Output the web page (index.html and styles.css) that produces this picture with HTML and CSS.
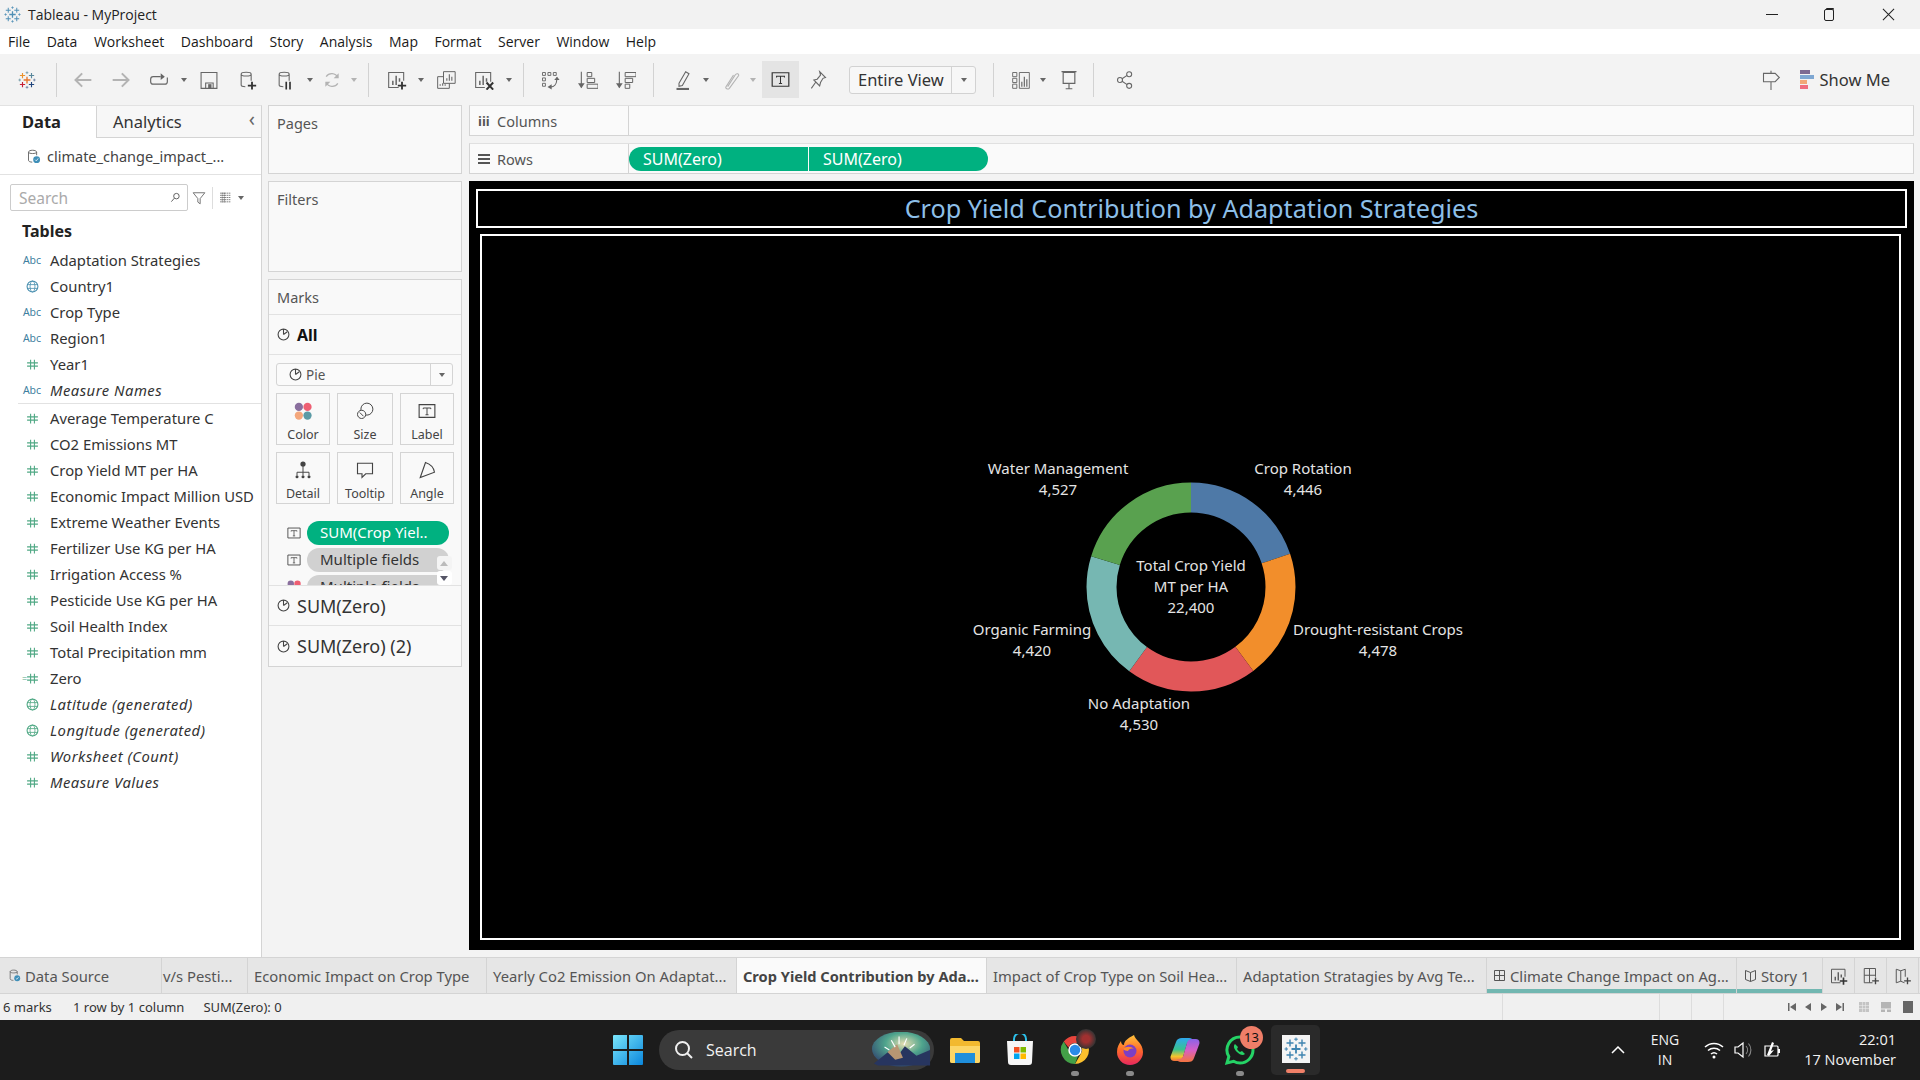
FILE: index.html
```html
<!DOCTYPE html>
<html lang="en">
<head>
  <meta charset="UTF-8">
  <title>Tableau - MyProject</title>
  <link rel="stylesheet" href="styles.css">
</head>
<body>

<svg class="sprite" xmlns="http://www.w3.org/2000/svg">
  <symbol id="i-logo" viewBox="0 0 24 24"><g fill="none" stroke="currentColor"><path d="M12 7.500v9M7.500 12h9" stroke-width="1.800"/><path d="M6 2.500v7M2.500 6h7M18 2.500v7M14.500 6h7M6 14.500v7M2.500 18h7M18 14.500v7M14.500 18h7" stroke-width="1.400"/><path d="M12 .5v3.500M10.200 2.200h3.600M12 20v3.500M10.200 21.800h3.600M2.200 10.200v3.600M.5 12h3.500M21.800 10.200v3.600M20 12h3.500" stroke-width="1"/></g></symbol>
  <symbol id="i-back" viewBox="0 0 24 24"><path d="M22 12H3M11 4l-8 8 8 8" fill="none" stroke="currentColor" stroke-width="2.400"/></symbol>
  <symbol id="i-fwd" viewBox="0 0 24 24"><path d="M2 12h19M13 4l8 8-8 8" fill="none" stroke="currentColor" stroke-width="2.400"/></symbol>
  <symbol id="i-redo" viewBox="0 0 24 24"><path d="M14 8H5a3 3 0 0 0-3 3v3a3 3 0 0 0 3 3h14a3 3 0 0 0 3-3v-5" fill="none" stroke="currentColor" stroke-width="1.400"/><path d="M14 4l5 4-5 4z" fill="currentColor"/></symbol>
  <symbol id="i-save" viewBox="0 0 24 24"><path d="M2.500 3h19v19h-19zM8 22v-6.500h9V22" fill="none" stroke="currentColor" stroke-width="1.300"/><path d="M11 17h4v5h-4z" fill="currentColor"/></symbol>
  <symbol id="i-dbadd" viewBox="0 0 24 24"><path d="M5 5c0-3 12-3 12 0v8M5 5c0 3 12 3 12 0M5 5v13c0 1 2 2 5 2" fill="none" stroke="currentColor" stroke-width="1.300"/><path d="M18 14v9.500M13 18.700h10" fill="none" stroke="#333" stroke-width="2.200"/></symbol>
  <symbol id="i-dbpause" viewBox="0 0 24 24"><path d="M5 5c0-3 12-3 12 0v8M5 5c0 3 12 3 12 0M5 5v13c0 1 2 2 5 2" fill="none" stroke="currentColor" stroke-width="1.300"/><path d="M13.500 14v9.500M18 14v9.500" fill="none" stroke="#333" stroke-width="2"/></symbol>
  <symbol id="i-refresh" viewBox="0 0 24 24"><path d="M19 9a8 8 0 0 0-14-1M5 15a8 8 0 0 0 14 1" fill="none" stroke="currentColor" stroke-width="1.400"/><path d="M20 4v6h-6zM4 20v-6h6z" fill="currentColor"/></symbol>
  <symbol id="i-sheetadd" viewBox="0 0 24 24"><path d="M14 21H2V3h18v10" fill="none" stroke="currentColor" stroke-width="1.300"/><path d="M7 18v-5M11 18V7M15 14V10" stroke="currentColor" stroke-width="1.800"/><path d="M18 14v9.500M13 18.700h10" fill="none" stroke="#333" stroke-width="2.200"/></symbol>
  <symbol id="i-sheetdup" viewBox="0 0 24 24"><path d="M9 2h14v14H9zM9 8H2v14h14v-6" fill="none" stroke="currentColor" stroke-width="1.200"/><path d="M13 13v-3M16 13V5M19 13V8M5 19v-2M8 19v-3M11 19v-2" stroke="currentColor" stroke-width="1.300"/></symbol>
  <symbol id="i-sheetclr" viewBox="0 0 24 24"><path d="M13 21H2V3h18v11" fill="none" stroke="currentColor" stroke-width="1.300"/><path d="M7 18v-5M11 18V7M15 14V10" stroke="currentColor" stroke-width="1.800"/><path d="M15 15l8 8.500M23 15l-8 8.500" fill="none" stroke="#333" stroke-width="2.400"/></symbol>
  <symbol id="i-swap" viewBox="0 0 24 24"><path d="M3 3h3.500v3.500H3zM9.500 3H13v3.500H9.500zM16 3h3.500v3.500H16zM3 9.500h3.500V13H3zM3 16h3.500v3.500H3z" fill="none" stroke="currentColor" stroke-width="1.100"/><path d="M20 9v4a8 8 0 0 1-7 7.500" fill="none" stroke="currentColor" stroke-width="1.300"/><path d="M14 17l-5 3.500 5 3zM17 12l3.500-4 3 4z" fill="currentColor"/></symbol>
  <symbol id="i-sortup" viewBox="0 0 24 24"><path d="M4 2v19" fill="none" stroke="currentColor" stroke-width="1.300"/><path d="M0 16l4 6 4-6z" fill="currentColor"/><path d="M11 3h5.500v5H11zM11 10h9v5h-9zM11 17h13v5H11z" fill="none" stroke="currentColor" stroke-width="1.200"/></symbol>
  <symbol id="i-sortdn" viewBox="0 0 24 24"><path d="M4 2v19" fill="none" stroke="currentColor" stroke-width="1.300"/><path d="M0 16l4 6 4-6z" fill="currentColor"/><path d="M11 3h13v5H11zM11 10h9v5h-9zM11 17h5.500v5H11z" fill="none" stroke="currentColor" stroke-width="1.200"/></symbol>
  <symbol id="i-pen" viewBox="0 0 24 24"><path d="M6 16L14 2l4 2.500-8 14-4 1z" fill="none" stroke="currentColor" stroke-width="1.300"/><path d="M3 21.500h15v2.500H3z" fill="currentColor"/></symbol>
  <symbol id="i-clip" viewBox="0 0 24 24"><path d="M8 20L17 6c2-3 5-1 4 1L10 22c-2 2-5 0-4-2l9-14" fill="none" stroke="currentColor" stroke-width="1.300"/></symbol>
  <symbol id="i-tbox" viewBox="0 0 24 24"><path d="M1.500 3.500h21v17h-21z" fill="none" stroke="currentColor" stroke-width="1.500"/><path d="M7 9.500V8h10v1.500M12 8v9M10 17h4" fill="none" stroke="currentColor" stroke-width="1.300"/></symbol>
  <symbol id="i-pin" viewBox="0 0 24 24"><path d="M14 2l7 7-3 1-3 5-1 4-7-7 4-1 4-5zM9 15l-5 7" fill="none" stroke="currentColor" stroke-width="1.300"/></symbol>
  <symbol id="i-cards" viewBox="0 0 24 24"><path d="M2 3h5v5H2zM2 10h5v5H2zM2 17h5v5H2zM10 3h12v19H10z" fill="none" stroke="currentColor" stroke-width="1.100"/><path d="M13 20v-6M16 20V8M19 20v-9" stroke="currentColor" stroke-width="1.400"/></symbol>
  <symbol id="i-present" viewBox="0 0 24 24"><path d="M3 2h18M5 3h14v13H5zM12 16v6M8 22.500h8" fill="none" stroke="currentColor" stroke-width="1.400"/></symbol>
  <symbol id="i-share" viewBox="0 0 24 24"><circle cx="17" cy="5" r="3" fill="none" stroke="currentColor" stroke-width="1.300"/><circle cx="6" cy="12" r="3" fill="none" stroke="currentColor" stroke-width="1.300"/><circle cx="17" cy="19" r="3" fill="none" stroke="currentColor" stroke-width="1.300"/><path d="M8.500 10.500l6-4M8.500 13.500l6 4" stroke="currentColor" stroke-width="1.300"/></symbol>
  <symbol id="i-sign" viewBox="0 0 24 24"><path d="M12 1v3M3 4h14l5 5-5 5H3zM12 14v10" fill="none" stroke="currentColor" stroke-width="1.300"/></symbol>
  <symbol id="i-db" viewBox="0 0 24 24"><path d="M4 5c0-4 13-4 13 0v5M4 5c0 3 13 3 13 0M4 5v13c0 2 3 3 6 3" fill="none" stroke="#666" stroke-width="1.500"/><circle cx="17" cy="17" r="5.500" fill="#3f8fb8"/><path d="M14.500 17l2 2 3-4" fill="none" stroke="#fff" stroke-width="1.200"/></symbol>
  <symbol id="i-search" viewBox="0 0 24 24"><circle cx="14" cy="9" r="6" fill="none" stroke="currentColor" stroke-width="2"/><path d="M9.500 13.500L3 21" stroke="currentColor" stroke-width="2"/></symbol>
  <symbol id="i-filter" viewBox="0 0 24 24"><path d="M2 3h20l-8 10v9l-4-3v-6z" fill="none" stroke="currentColor" stroke-width="1.500"/></symbol>
  <symbol id="i-list" viewBox="0 0 24 24"><path d="M2 4h20M2 8h20M2 12h20M2 16h20M2 20h20M6 3v18M10 3v18" fill="none" stroke="currentColor" stroke-width="1.500" stroke-dasharray="3 1"/></symbol>
  <symbol id="i-hash" viewBox="0 0 24 24"><path d="M8.500 3v18M15.500 3v18M2 9h20M2 15h20" fill="none" stroke="currentColor" stroke-width="2"/></symbol>
  <symbol id="i-globe" viewBox="0 0 24 24"><circle cx="12" cy="12" r="10" fill="none" stroke="currentColor" stroke-width="2"/><ellipse cx="12" cy="12" rx="4.500" ry="10" fill="none" stroke="currentColor" stroke-width="1.500"/><path d="M2 8.500h20M2 15.500h20" stroke="currentColor" stroke-width="1.500"/></symbol>
  <symbol id="i-pie" viewBox="0 0 24 24"><circle cx="12" cy="12" r="10" fill="none" stroke="currentColor" stroke-width="2"/><path d="M12 12V2M12 12l7-5" fill="none" stroke="currentColor" stroke-width="2"/></symbol>
  <symbol id="i-size" viewBox="0 0 24 24"><circle cx="14.500" cy="9.500" r="8" fill="none" stroke="currentColor" stroke-width="1.300"/><circle cx="7.500" cy="16.500" r="5.500" fill="#f9f9f9" stroke="currentColor" stroke-width="1.300"/><path d="M5 14l5 5" stroke="currentColor" stroke-width="1.300"/></symbol>
  <symbol id="i-detail" viewBox="0 0 24 24"><circle cx="12" cy="4" r="3.500" fill="currentColor"/><path d="M12 7v8M4 19v-4h16v4M12 15v4" fill="none" stroke="currentColor" stroke-width="1.300"/><circle cx="4" cy="21" r="2" fill="currentColor"/><circle cx="12" cy="21" r="2" fill="currentColor"/><circle cx="20" cy="21" r="2" fill="currentColor"/></symbol>
  <symbol id="i-tip" viewBox="0 0 24 24"><path d="M2 3h20v14h-9l-5 5v-5H2z" fill="none" stroke="currentColor" stroke-width="1.500"/></symbol>
  <symbol id="i-angle" viewBox="0 0 24 24"><path d="M3 22L10 2c6 2 11 7 12 13z" fill="none" stroke="currentColor" stroke-width="1.500"/></symbol>
  <symbol id="i-dots" viewBox="0 0 24 24"><circle cx="6.500" cy="6.500" r="5.500" fill="#8a6f9e"/><circle cx="18" cy="6.500" r="5.500" fill="#ee5f73"/><circle cx="6.500" cy="18" r="5.500" fill="#f4a77c"/><circle cx="18" cy="18" r="5.500" fill="#5a9aa5"/></symbol>
  <symbol id="i-newdash" viewBox="0 0 24 24"><path d="M14 21H3V2h15v11M3 11h15M10 2v19" fill="none" stroke="currentColor" stroke-width="1.300"/><path d="M18 14v9M13.500 18.500h9" fill="none" stroke="#444" stroke-width="1.800"/></symbol>
  <symbol id="i-newstory" viewBox="0 0 24 24"><path d="M14 21l-5-2-6 2V3l6 2 6-2v10M9 5v14" fill="none" stroke="currentColor" stroke-width="1.300"/><path d="M18 14v9M13.500 18.500h9" fill="none" stroke="#444" stroke-width="1.800"/></symbol>
</svg>

<header class="titlebar">
  <svg class="title-logo"><use href="#i-logo"/></svg>
  <span class="title-text">Tableau - MyProject</span>
  <div class="win-btns">
    <span class="win-min"></span>
    <span class="win-max"></span>
    <svg class="win-close" viewBox="0 0 14 14"><path d="M1 1l12 12M13 1L1 13" stroke="#222" stroke-width="1.100"/></svg>
  </div>
</header>

<nav class="menubar">
  <span>File</span><span>Data</span><span>Worksheet</span><span>Dashboard</span><span>Story</span><span>Analysis</span><span>Map</span><span>Format</span><span>Server</span><span>Window</span><span>Help</span>
</nav>

<div class="toolbar">
  <span class="tool tool-logo">
    <svg class="logo-color" viewBox="0 0 24 24" fill="none">
      <path d="M12 7.500v9M7.500 12h9" stroke="#e8762b" stroke-width="1.800"/>
      <path d="M6 2.500v7M2.500 6h7" stroke="#eb9129" stroke-width="1.500"/>
      <path d="M18 2.500v7M14.500 6h7" stroke="#59879b" stroke-width="1.500"/>
      <path d="M6 14.500v7M2.500 18h7" stroke="#c72035" stroke-width="1.500"/>
      <path d="M18 14.500v7M14.500 18h7" stroke="#1f447d" stroke-width="1.500"/>
      <path d="M12 .5v3.500M10.200 2.200h3.600M2.200 10.200v3.600M.5 12h3.500" stroke="#7099a6" stroke-width="1.100"/>
      <path d="M12 20v3.500M10.200 21.800h3.600M21.800 10.200v3.600M20 12h3.500" stroke="#6a7ea0" stroke-width="1.100"/>
    </svg>
  </span>
  <span class="tool-sep tool-sep-first"></span>
  <span class="tool faded"><svg class="ico"><use href="#i-back"/></svg></span>
  <span class="tool faded"><svg class="ico"><use href="#i-fwd"/></svg></span>
  <span class="tool"><svg class="ico"><use href="#i-redo"/></svg></span>
  <span class="caret"></span>
  <span class="tool"><svg class="ico"><use href="#i-save"/></svg></span>
  <span class="tool"><svg class="ico"><use href="#i-dbadd"/></svg></span>
  <span class="tool"><svg class="ico"><use href="#i-dbpause"/></svg></span>
  <span class="caret"></span>
  <span class="tool tool-narrow faded"><svg class="ico"><use href="#i-refresh"/></svg></span>
  <span class="caret faded"></span>
  <span class="tool-sep"></span>
  <span class="tool tool-sheet"><svg class="ico"><use href="#i-sheetadd"/></svg></span>
  <span class="caret"></span>
  <span class="tool"><svg class="ico"><use href="#i-sheetdup"/></svg></span>
  <span class="tool"><svg class="ico"><use href="#i-sheetclr"/></svg></span>
  <span class="caret"></span>
  <span class="tool-sep"></span>
  <span class="tool"><svg class="ico"><use href="#i-swap"/></svg></span>
  <span class="tool"><svg class="ico"><use href="#i-sortup"/></svg></span>
  <span class="tool"><svg class="ico"><use href="#i-sortdn"/></svg></span>
  <span class="tool-sep"></span>
  <span class="tool tool-pen"><svg class="ico"><use href="#i-pen"/></svg></span>
  <span class="caret caret-pen"></span>
  <span class="tool tool-narrow faded"><svg class="ico"><use href="#i-clip"/></svg></span>
  <span class="caret faded"></span>
  <span class="tool tool-on"><svg class="ico-sm"><use href="#i-tbox"/></svg></span>
  <span class="tool tool-narrow tool-pin"><svg class="ico"><use href="#i-pin"/></svg></span>
  <div class="fit-select"><span class="fit-label">Entire View</span><span class="fit-arrow"><span class="caret"></span></span></div>
  <span class="tool-sep tool-sep-fit"></span>
  <span class="tool"><svg class="ico"><use href="#i-cards"/></svg></span>
  <span class="caret caret-cards"></span>
  <span class="tool tool-narrow tool-present"><svg class="ico"><use href="#i-present"/></svg></span>
  <span class="tool-sep"></span>
  <span class="tool tool-narrow tool-share"><svg class="ico"><use href="#i-share"/></svg></span>
  <div class="toolbar-right">
    <svg class="ico"><use href="#i-sign"/></svg>
    <div class="showme">
      <span class="showme-bars"><i class="bar-a"></i><i class="bar-b"></i><i class="bar-c"></i><i class="bar-d"></i></span>
      <span>Show Me</span>
    </div>
  </div>
</div>

<main class="main">
  <aside class="sidebar">
    <div class="side-tabs">
      <div class="side-tab side-tab-on">Data</div>
      <div class="side-tab">Analytics</div>
      <span class="side-collapse">‹</span>
    </div>
    <div class="source"><svg class="source-ico"><use href="#i-db"/></svg>climate_change_impact_...</div>
    <div class="side-search">
      <div class="search-box"><span>Search</span><svg class="search-ico"><use href="#i-search"/></svg></div>
      <svg class="filter-ico"><use href="#i-filter"/></svg>
      <span class="search-sep"></span>
      <svg class="list-ico"><use href="#i-list"/></svg>
      <span class="caret"></span>
    </div>
    <h2 class="tables-head">Tables</h2>
    <ul class="fields">
      <li><span class="f-ico abc">Abc</span>Adaptation Strategies</li>
      <li><span class="f-ico blue"><svg><use href="#i-globe"/></svg></span>Country1</li>
      <li><span class="f-ico abc">Abc</span>Crop Type</li>
      <li><span class="f-ico abc">Abc</span>Region1</li>
      <li><span class="f-ico green"><svg><use href="#i-hash"/></svg></span>Year1</li>
      <li class="it"><span class="f-ico abc">Abc</span>Measure Names</li>
    </ul>
    <ul class="fields fields-measures">
      <li><span class="f-ico green"><svg><use href="#i-hash"/></svg></span>Average Temperature C</li>
      <li><span class="f-ico green"><svg><use href="#i-hash"/></svg></span>CO2 Emissions MT</li>
      <li><span class="f-ico green"><svg><use href="#i-hash"/></svg></span>Crop Yield MT per HA</li>
      <li><span class="f-ico green"><svg><use href="#i-hash"/></svg></span>Economic Impact Million USD</li>
      <li><span class="f-ico green"><svg><use href="#i-hash"/></svg></span>Extreme Weather Events</li>
      <li><span class="f-ico green"><svg><use href="#i-hash"/></svg></span>Fertilizer Use KG per HA</li>
      <li><span class="f-ico green"><svg><use href="#i-hash"/></svg></span>Irrigation Access %</li>
      <li><span class="f-ico green"><svg><use href="#i-hash"/></svg></span>Pesticide Use KG per HA</li>
      <li><span class="f-ico green"><svg><use href="#i-hash"/></svg></span>Soil Health Index</li>
      <li><span class="f-ico green"><svg><use href="#i-hash"/></svg></span>Total Precipitation mm</li>
      <li><span class="f-ico green calc"><svg><use href="#i-hash"/></svg></span>Zero</li>
      <li class="it"><span class="f-ico green"><svg><use href="#i-globe"/></svg></span>Latitude (generated)</li>
      <li class="it"><span class="f-ico green"><svg><use href="#i-globe"/></svg></span>Longitude (generated)</li>
      <li class="it"><span class="f-ico green"><svg><use href="#i-hash"/></svg></span>Worksheet (Count)</li>
      <li class="it"><span class="f-ico green"><svg><use href="#i-hash"/></svg></span>Measure Values</li>
    </ul>
  </aside>

  <section class="cards">
    <div class="card card-pages"><div class="card-title">Pages</div></div>
    <div class="card card-filters"><div class="card-title">Filters</div></div>
    <div class="card card-marks">
      <div class="card-title marks-title">Marks</div>
      <div class="marks-row marks-all"><svg class="pie-ico"><use href="#i-pie"/></svg>All</div>
      <div class="marks-body">
        <div class="mark-type"><span class="mark-type-name"><svg class="pie-ico"><use href="#i-pie"/></svg>Pie</span><span class="mark-type-arrow"><span class="caret"></span></span></div>
        <div class="mark-btns">
          <div class="mark-btn"><svg><use href="#i-dots"/></svg>Color</div>
          <div class="mark-btn"><svg><use href="#i-size"/></svg>Size</div>
          <div class="mark-btn"><svg><use href="#i-tbox"/></svg>Label</div>
          <div class="mark-btn"><svg><use href="#i-detail"/></svg>Detail</div>
          <div class="mark-btn"><svg><use href="#i-tip"/></svg>Tooltip</div>
          <div class="mark-btn"><svg><use href="#i-angle"/></svg>Angle</div>
        </div>
        <div class="mark-pills">
          <div class="mark-pill-row"><svg><use href="#i-tbox"/></svg><span class="m-pill m-pill-green">SUM(Crop Yiel..</span></div>
          <div class="mark-pill-row"><svg><use href="#i-tbox"/></svg><span class="m-pill">Multiple fields</span></div>
          <div class="mark-pill-row"><svg><use href="#i-dots"/></svg><span class="m-pill">Multiple fields</span></div>
          <div class="scroll-btns"><span class="scroll-up"></span><span class="scroll-down"></span></div>
        </div>
      </div>
      <div class="marks-row marks-layer"><svg class="pie-ico"><use href="#i-pie"/></svg>SUM(Zero)</div>
      <div class="marks-row marks-layer"><svg class="pie-ico"><use href="#i-pie"/></svg>SUM(Zero) (2)</div>
    </div>
  </section>

  <section class="sheet">
    <div class="shelf">
      <div class="shelf-label"><span class="shelf-ico-cols">iii</span>Columns</div>
    </div>
    <div class="shelf">
      <div class="shelf-label"><span class="shelf-ico-rows"><i></i><i></i><i></i></span>Rows</div>
      <div class="shelf-pills"><span class="pill pill-left">SUM(Zero)</span><span class="pill pill-right">SUM(Zero)</span></div>
    </div>
    <div class="view">
      <div class="view-title">Crop Yield Contribution by Adaptation Strategies</div>
      <div class="chart">
        <svg class="donut" viewBox="0 0 210 210">
          <g fill="none" stroke-width="30" transform="rotate(-90 105 105)">
            <circle cx="105" cy="105" r="89.5" pathLength="22401" stroke="#4e79a7" stroke-dasharray="4446 22401"/>
            <circle cx="105" cy="105" r="89.5" pathLength="22401" stroke="#f28e2b" stroke-dasharray="4478 22401" stroke-dashoffset="-4446"/>
            <circle cx="105" cy="105" r="89.5" pathLength="22401" stroke="#e15759" stroke-dasharray="4530 22401" stroke-dashoffset="-8924"/>
            <circle cx="105" cy="105" r="89.5" pathLength="22401" stroke="#76b7b2" stroke-dasharray="4420 22401" stroke-dashoffset="-13454"/>
            <circle cx="105" cy="105" r="89.5" pathLength="22401" stroke="#59a14f" stroke-dasharray="4527 22401" stroke-dashoffset="-17874"/>
          </g>
        </svg>
        <div class="lbl lbl-water">Water Management<br>4,527</div>
        <div class="lbl lbl-rotation">Crop Rotation<br>4,446</div>
        <div class="lbl lbl-organic">Organic Farming<br>4,420</div>
        <div class="lbl lbl-drought">Drought-resistant Crops<br>4,478</div>
        <div class="lbl lbl-none">No Adaptation<br>4,530</div>
        <div class="lbl lbl-total">Total Crop Yield<br>MT per HA<br>22,400</div>
      </div>
    </div>
  </section>
</main>

<div class="tabs">
  <div class="tab tab-source"><svg class="tab-ico"><use href="#i-db"/></svg>Data Source</div>
  <div class="tab tab-short">v/s Pesti...</div>
  <div class="tab tab-eco">Economic Impact on Crop Type</div>
  <div class="tab tab-wide">Yearly Co2 Emission On Adaptat...</div>
  <div class="tab tab-wide tab-on">Crop Yield Contribution by Ada...</div>
  <div class="tab tab-wide">Impact of Crop Type on Soil Hea...</div>
  <div class="tab tab-wide">Adaptation Stratagies by Avg Te...</div>
  <div class="tab tab-wide tab-teal"><svg class="tab-ico"><path d="M1.500 1.500h10v10h-10zM6.500 1.500v10M1.500 6.500h10" fill="none" stroke="#555" stroke-width="1"/></svg>Climate Change Impact on Ag...</div>
  <div class="tab tab-story tab-teal"><svg class="tab-ico"><path d="M1.500 1.500l5 2 5-2v9l-5 2-5-2zM6.500 3.500v9" fill="none" stroke="#555" stroke-width="1"/></svg>Story 1</div>
  <div class="tab tab-add"><svg class="ico"><use href="#i-sheetadd"/></svg></div>
  <div class="tab tab-add"><svg class="ico"><use href="#i-newdash"/></svg></div>
  <div class="tab tab-add"><svg class="ico"><use href="#i-newstory"/></svg></div>
</div>

<div class="status">
  <span class="st-marks">6 marks</span>
  <span class="st-rows">1 row by 1 column</span>
  <span>SUM(Zero): 0</span>
  <div class="status-right">
    <span class="st-cell st-cell-a"></span>
    <span class="st-cell"></span>
    <span class="st-cell"></span>
    <span class="st-cell st-cell-nav">
      <svg class="nav-ico" viewBox="0 0 10 10"><path d="M1 1v8h1.500V1zM9 1v8L3 5z" fill="#666"/></svg>
      <svg class="nav-ico" viewBox="0 0 10 10"><path d="M8 1v8L2 5z" fill="#666"/></svg>
      <svg class="nav-ico" viewBox="0 0 10 10"><path d="M2 1v8l6-4z" fill="#666"/></svg>
      <svg class="nav-ico" viewBox="0 0 10 10"><path d="M9 1v8H7.500V1zM1 1v8l6-4z" fill="#666"/></svg>
    </span>
    <svg class="view-ico" viewBox="0 0 12 12"><path d="M1 1h3v3H1zM4.500 1h3v3h-3zM8 1h3v3H8zM1 4.500h3v3H1zM4.500 4.500h3v3h-3zM8 4.500h3v3H8zM1 8h3v3H1zM4.500 8h3v3h-3zM8 8h3v3H8z" fill="#c4c4c4"/></svg>
    <svg class="view-ico" viewBox="0 0 12 12"><path d="M1 1h10v6.500H1zM1 8.500h4V11H1zM7 8.500h4V11H7z" fill="#b5b5b5"/></svg>
    <svg class="view-ico" viewBox="0 0 12 12"><path d="M1 0h10v12H1z" fill="#666"/></svg>
  </div>
</div>

<footer class="taskbar">
  <div class="task-center">
    <svg class="win-logo" viewBox="0 0 30 30">
      <defs><linearGradient id="wl" x1="0" y1="0" x2="1" y2="1"><stop offset="0" stop-color="#7ae6fb"/><stop offset="1" stop-color="#0a86dc"/></linearGradient></defs>
      <path d="M0 1a1 1 0 0 1 1-1h13v14H0zM16 0h13a1 1 0 0 1 1 1v13H16zM0 16h14v14H1a1 1 0 0 1-1-1zM16 16h14v13a1 1 0 0 1-1 1H16z" fill="url(#wl)"/>
    </svg>
    <div class="task-search">
      <svg class="task-search-ico" viewBox="0 0 20 20"><circle cx="8.500" cy="8.500" r="6.500" fill="none" stroke="#f0f0f0" stroke-width="2"/><path d="M13 13l5 5" stroke="#f0f0f0" stroke-width="2"/></svg>
      <span>Search</span>
      <svg class="task-search-art" viewBox="0 0 64 36">
        <defs><radialGradient id="sky" cx=".55" cy=".35" r=".7"><stop offset="0" stop-color="#e6ddb0"/><stop offset=".45" stop-color="#4fa58d"/><stop offset="1" stop-color="#2f3f6d"/></radialGradient></defs>
        <ellipse cx="32" cy="17" rx="30" ry="18" fill="url(#sky)"/>
        <path d="M4 32l16-13 8 6 8-11 12 10 14-6v16H8z" fill="#27355f"/>
        <path d="M18 20l10-8 6 14-8 2z" fill="#b89673"/>
        <path d="M30 4v8M38 6l-3 7M22 8l4 7M46 12l-5 4M15 15l5 3" stroke="#fff" stroke-width="1.200"/>
      </svg>
    </div>
    <svg class="app app-first" viewBox="0 0 32 32">
      <path d="M1 6a2 2 0 0 1 2-2h9l3 3h14a2 2 0 0 1 2 2v18a2 2 0 0 1-2 2H3a2 2 0 0 1-2-2z" fill="#f2b92f"/>
      <path d="M1 12h30v15a2 2 0 0 1-2 2H3a2 2 0 0 1-2-2z" fill="#fcd667"/>
      <path d="M6 19h20v10H6z" fill="#1f8fdc"/>
    </svg>
    <svg class="app" viewBox="0 0 32 32">
      <path d="M10 8V5a6 6 0 0 1 12 0v3" fill="none" stroke="#2cc0ea" stroke-width="2"/>
      <path d="M3 7h26l-1 21a3 3 0 0 1-3 3H7a3 3 0 0 1-3-3z" fill="#f6f6f6"/>
      <path d="M10 13h5.500v5.500H10z" fill="#f25022"/><path d="M16.500 13H22v5.500h-5.500z" fill="#7fba00"/><path d="M10 19.500h5.500V25H10z" fill="#00a4ef"/><path d="M16.500 19.500H22V25h-5.500z" fill="#ffb900"/>
    </svg>
    <div class="app-wrap">
      <svg class="app" viewBox="0 0 32 32">
        <path d="M16 2a14 14 0 0 1 12.100 7H16a7 7 0 0 0-6.500 4.500L4.700 7.600A14 14 0 0 1 16 2z" fill="#e8453c"/>
        <path d="M28.100 9A14 14 0 0 1 16 30l6-10.500A7 7 0 0 0 21 11z" fill="#fbc02d"/>
        <path d="M4.700 7.600L10 17a7 7 0 0 0 9 5l-3 8A14 14 0 0 1 4.700 7.600z" fill="#43a047"/>
        <circle cx="16" cy="16" r="6" fill="#2b8be6" stroke="#fff" stroke-width="1.500"/>
      </svg>
      <span class="avatar"></span>
      <span class="run-dot"></span>
    </div>
    <div class="app-wrap">
      <svg class="app" viewBox="0 0 32 32">
        <defs><linearGradient id="ff" x1="0" y1="0" x2="0" y2="1"><stop offset="0" stop-color="#ffc33a"/><stop offset=".5" stop-color="#ff6a2b"/><stop offset="1" stop-color="#e6285e"/></linearGradient></defs>
        <path d="M20 1c1 5 9 8 9 17a13 13 0 0 1-26 0c0-5 2-8 4-11 0 2 1 4 3 4 0-4 4-7 10-10z" fill="url(#ff)"/>
        <circle cx="16" cy="17" r="6.500" fill="#7d3fc4"/>
        <path d="M9 15c3-3 8-3 11 0-3-1-5 0-6 2-2 0-4-1-5-2z" fill="#ff8a2b"/>
      </svg>
      <span class="run-dot"></span>
    </div>
    <svg class="app" viewBox="0 0 32 32">
      <defs>
        <linearGradient id="cp1" x1="0" y1="0" x2="0" y2="1"><stop offset="0" stop-color="#2fa8ef"/><stop offset=".5" stop-color="#39c28f"/><stop offset=".8" stop-color="#f5c52c"/><stop offset="1" stop-color="#f0703a"/></linearGradient>
        <linearGradient id="cp2" x1="0" y1="1" x2="0" y2="0"><stop offset="0" stop-color="#8a63e8"/><stop offset=".5" stop-color="#d85fc4"/><stop offset="1" stop-color="#f4743f"/></linearGradient>
      </defs>
      <path d="M13 3h7c2.500 0 3.500 1 4 3-1-.5-2-.5-3 0-2 .5-3 2-3.500 4l-3.500 12c-.5 2-2 4-5 4H5c-3 0-4-3-3.300-5L7 7c1-3 3-4 6-4z" fill="url(#cp1)" transform="translate(0 1)"/>
      <path d="M13 3h7c2.500 0 3.500 1 4 3-1-.5-2-.5-3 0-2 .5-3 2-3.500 4l-3.500 12c-.5 2-2 4-5 4H5c-3 0-4-3-3.300-5L7 7c1-3 3-4 6-4z" fill="url(#cp2)" transform="rotate(180 16 16) translate(0 1)"/>
    </svg>
    <div class="app-wrap">
      <svg class="app" viewBox="0 0 32 32">
        <path d="M16 3a13 13 0 0 1 0 26c-2.300 0-4.500-.6-6.400-1.700L3 29l1.800-6.400A13 13 0 0 1 16 3z" fill="none" stroke="#25d366" stroke-width="3"/>
        <path d="M11 10c-2 2-1 5 2 8s6 4 8 2l-3-3-2 1c-1-.5-2-1.500-3-3l1-2z" fill="#25d366"/>
      </svg>
      <span class="badge">13</span>
      <span class="run-dot"></span>
    </div>
    <div class="app-active">
      <span class="tb-tile"><svg><use href="#i-logo"/></svg></span>
      <span class="active-bar"></span>
    </div>
  </div>
  <div class="tray">
    <svg class="tray-chev" viewBox="0 0 14 8"><path d="M1 7l6-6 6 6" fill="none" stroke="#fff" stroke-width="1.500"/></svg>
    <div class="tray-lang">ENG<br>IN</div>
    <svg class="tray-ico" viewBox="0 0 20 20"><path d="M1 7a13 13 0 0 1 18 0M4 10.500a9 9 0 0 1 12 0M7 14a4.500 4.500 0 0 1 6 0" fill="none" stroke="#fff" stroke-width="1.500"/><circle cx="10" cy="17" r="1.500" fill="#fff"/></svg>
    <svg class="tray-ico" viewBox="0 0 20 20"><path d="M2 7h3l5-4v14l-5-4H2z" fill="none" stroke="#fff" stroke-width="1.200"/><path d="M13 6a6 6 0 0 1 0 8M15.500 3.500a10 10 0 0 1 0 13" fill="none" stroke="#888" stroke-width="1.100"/></svg>
    <svg class="tray-ico" viewBox="0 0 20 20"><path d="M3 6h12a1 1 0 0 1 1 1v8a1 1 0 0 1-1 1H3z" fill="none" stroke="#fff" stroke-width="1.200"/><path d="M16 9h2v4h-2zM5 15L10 2l2 1-3 8 3-1-5 6z" fill="#fff"/></svg>
    <div class="tray-clock">22:01<br>17 November</div>
  </div>
</footer>

</body>
</html>
```
FILE: styles.css
```css
* {
  box-sizing: border-box;
}
body {
  margin: 0;
  width: 1920px;
  height: 1080px;
  overflow: hidden;
  display: flex;
  flex-direction: column;
  background-color: #f3f3f3;
  color: #333;
  font-family: "Noto Sans", sans-serif;
  font-size: 14px;
}
ul {
  list-style: none;
  margin: 0;
  padding: 0;
}
i {
  display: block;
}
.sprite {
  position: absolute;
  width: 0;
  height: 0;
}

/* window chrome */
.titlebar {
  height: 29px;
  flex: none;
  display: flex;
  align-items: center;
  padding-left: 4px;
  background-color: #f2f2f2;
  font-family: "Open Sans", sans-serif;
  font-size: 14px;
  color: #222;
}
.title-logo {
  width: 17px;
  height: 17px;
  color: #4f8fb5;
  margin-right: 7px;
}
.win-btns {
  margin-left: auto;
  display: flex;
  align-items: center;
}
.win-min {
  width: 12px;
  height: 1px;
  background-color: #222;
  margin-right: 46px;
}
.win-max {
  width: 10px;
  height: 12px;
  border: 1px solid #222;
  border-radius: 2px;
  box-shadow: 1px -2px 0 -1px #222;
  margin-right: 48px;
}
.win-close {
  width: 13px;
  height: 13px;
  margin-right: 25px;
}
.menubar {
  height: 25px;
  flex: none;
  display: flex;
  align-items: center;
  gap: 16.5px;
  padding-left: 8px;
  background-color: #fff;
  font-family: "Open Sans", sans-serif;
  font-size: 14px;
  color: #1a1a1a;
}

/* toolbar */
.toolbar {
  height: 51px;
  flex: none;
  display: flex;
  align-items: center;
  padding-left: 12px;
  background-color: #f3f3f3;
  color: #666;
}
.tool {
  width: 38px;
  height: 37px;
  flex: none;
  display: flex;
  align-items: center;
  justify-content: center;
}
.tool-logo {
  width: 30px;
}
.tool-narrow {
  width: 32px;
}
.tool-sheet {
  margin-left: 2px;
  margin-right: -1px;
}
.tool-pen {
  margin-left: 4px;
}
.caret-pen {
  margin-left: -3px;
  margin-right: 3px;
}
.tool-pin {
  margin-left: 3px;
}
.fit-select {
  margin-left: 15px;
}
.caret-cards {
  margin-left: -3px;
  margin-right: 5px;
}
.tool-present {
  margin-left: -1px;
}
.tool-share {
  margin-left: 8px;
}
.tool-on {
  width: 37px;
  margin-left: 3px;
  background-color: #e4e4e4;
  color: #333;
}
.faded {
  opacity: .45;
}
.ico {
  width: 20px;
  height: 20px;
  display: block;
}
.ico-sm {
  width: 19px;
  height: 19px;
}
.logo-color {
  width: 18px;
  height: 18px;
}
.caret {
  flex: none;
  width: 12px;
  height: 4px;
  position: relative;
}
.caret::after {
  content: "";
  position: absolute;
  left: 3px;
  top: 0;
  border-left: 3px solid transparent;
  border-right: 3px solid transparent;
  border-top: 4px solid #666;
}
.tool-sep {
  width: 1px;
  height: 34px;
  flex: none;
  background-color: #d2d2d2;
  margin: 0 7px 0 8px;
}
.tool-sep-first {
  margin: 0 7px 0 14px;
}
.tool-sep-fit {
  margin: 0 8px 0 17px;
}
.fit-select {
  width: 127px;
  height: 28px;
  flex: none;
  display: flex;
  border: 1px solid #d2d2d2;
  border-radius: 3px;
  background-color: #f7f7f7;
  color: #333;
  font-size: 16.5px;
}
.fit-label {
  flex: 1;
  line-height: 25px;
  padding-left: 8px;
}
.fit-arrow {
  width: 24px;
  border-left: 1px solid #d2d2d2;
  display: flex;
  align-items: center;
  justify-content: center;
}
.toolbar-right {
  margin-left: auto;
  display: flex;
  align-items: center;
  padding-right: 30px;
}
.showme {
  margin-left: 19px;
  display: flex;
  align-items: center;
  gap: 6px;
  color: #333;
  font-size: 16.5px;
}
.showme-bars {
  width: 14px;
}
.showme-bars i {
  height: 4px;
  margin-bottom: 1px;
}
.bar-a { width: 10px; background-color: #7c6a92; }
.bar-b { width: 14px; background-color: #7ea7d2; }
.bar-c { width: 7px; background-color: #f2a878; }
.bar-d { width: 8px; background-color: #ef6f80; }

/* main area */
.main {
  flex: 1;
  min-height: 0;
  display: flex;
}
.sidebar {
  width: 262px;
  flex: none;
  background-color: #fff;
  border-right: 1px solid #d4d4d4;
  border-top: 1px solid #e2e2e2;
}
.side-tabs {
  height: 32px;
  display: flex;
  position: relative;
  background-color: #f7f7f7;
  border-bottom: 1px solid #d4d4d4;
}
.side-tab {
  padding: 4px 0 0 16px;
  font-size: 16.5px;
}
.side-tab-on {
  width: 97px;
  padding-left: 22px;
  margin-bottom: -1px;
  background-color: #fff;
  border-right: 1px solid #d4d4d4;
  font-weight: 700;
  color: #222;
}
.side-collapse {
  position: absolute;
  right: 6px;
  top: -1px;
  font-size: 20px;
  color: #666;
}
.source {
  height: 37px;
  display: flex;
  align-items: center;
  padding-left: 26px;
  border-bottom: 1px solid #e2e2e2;
  color: #444;
  font-size: 14.5px;
}
.source-ico {
  width: 15px;
  height: 15px;
  margin-right: 6px;
}
.side-search {
  display: flex;
  align-items: center;
  height: 27px;
  margin: 9px 0 0 10px;
  color: #666;
}
.search-box {
  width: 178px;
  height: 27px;
  display: flex;
  align-items: center;
  justify-content: space-between;
  padding: 0 6px 0 8px;
  border: 1px solid #ccc;
  border-radius: 2px;
  color: #aaa;
  font-size: 15.5px;
}
.search-ico {
  width: 11px;
  height: 11px;
  color: #555;
}
.filter-ico {
  width: 14px;
  height: 14px;
  margin-left: 4px;
}
.search-sep {
  width: 1px;
  height: 22px;
  margin: 0 6px;
  background-color: #ddd;
}
.list-ico {
  width: 13px;
  height: 13px;
  margin-right: 3px;
}
.tables-head {
  margin: 7px 0 0 22px;
  height: 26px;
  line-height: 26px;
  font-size: 16px;
  color: #222;
}
.fields {
  margin-top: 3px;
}
.fields li {
  height: 26px;
  display: flex;
  align-items: center;
  font-size: 14.8px;
  color: #333;
  white-space: nowrap;
}
.fields-measures {
  margin: 0 0 0 18px;
  padding-top: 1px;
  border-top: 1px solid #e2e2e2;
}
.fields-measures .f-ico {
  margin-left: -18px;
}
.it {
  font-style: italic;
  letter-spacing: .5px;
}
.f-ico {
  width: 50px;
  flex: none;
  display: flex;
  align-items: center;
  justify-content: center;
  padding-left: 14px;
  position: relative;
  letter-spacing: 0;
}
.f-ico svg {
  width: 13px;
  height: 13px;
  flex: none;
}
.abc {
  font-size: 10.5px;
  font-style: normal;
  color: #3f7f9f;
}
.blue {
  color: #4a90b0;
}
.green {
  color: #4fa884;
}
.calc::before {
  content: "=";
  position: absolute;
  left: 22px;
  font-size: 9px;
  font-style: normal;
}

/* pages, filters, marks */
.cards {
  width: 194px;
  flex: none;
  margin: 0 0 7px 6px;
  display: flex;
  flex-direction: column;
  gap: 7px;
}
.card {
  background-color: #f9f9f9;
  border: 1px solid #d4d4d4;
}
.card-pages {
  height: 69px;
}
.card-filters {
  height: 91px;
}
.card-marks {
  height: 388px;
}
.card-title {
  padding: 7px 8px 5px;
  color: #555;
  font-size: 14.5px;
}
.marks-title {
  height: 35px;
  border-bottom: 1px solid #e2e2e2;
}
.marks-row {
  height: 40px;
  display: flex;
  align-items: center;
  padding-left: 8px;
  border-bottom: 1px solid #e2e2e2;
  font-size: 18px;
}
.marks-row:last-child {
  border-bottom: none;
}
.marks-all {
  font-weight: 700;
  font-size: 16px;
  color: #111;
}
.pie-ico {
  width: 13px;
  height: 13px;
  margin-right: 7px;
  color: #444;
}
.marks-body {
  padding: 8px 8px 0 7px;
  height: 231px;
  overflow: hidden;
  border-bottom: 1px solid #e2e2e2;
}
.mark-type {
  height: 23px;
  display: flex;
  border: 1px solid #d4d4d4;
  border-radius: 3px;
  background-color: #fafafa;
}
.mark-type-name {
  flex: 1;
  display: flex;
  align-items: center;
  padding-left: 12px;
  font-size: 13.5px;
  color: #555;
}
.mark-type-name .pie-ico {
  margin-right: 4px;
}
.mark-type-arrow {
  width: 22px;
  border-left: 1px solid #d4d4d4;
  display: flex;
  align-items: center;
  justify-content: center;
}
.mark-btns {
  margin-top: 7px;
  display: grid;
  grid-template-columns: 54px 56px 54px;
  grid-auto-rows: 52px;
  gap: 7px 7px;
}
.mark-btn {
  display: flex;
  flex-direction: column;
  align-items: center;
  gap: 6px;
  padding-top: 8px;
  border: 1px solid #d4d4d4;
  font-size: 12.5px;
  color: #444;
}
.mark-btn svg {
  width: 18px;
  height: 18px;
  color: #444;
}
.mark-pills {
  margin-top: 17px;
  position: relative;
}
.mark-pill-row {
  height: 27px;
  display: flex;
  align-items: flex-start;
}
.mark-pill-row svg {
  width: 14px;
  height: 14px;
  margin: 5px 6px 0 11px;
  flex: none;
  color: #444;
}
.m-pill {
  width: 142px;
  height: 24px;
  line-height: 23px;
  padding-left: 13px;
  border-radius: 12px;
  background-color: #d1d1d1;
  font-size: 15px;
  color: #333;
  white-space: nowrap;
  overflow: hidden;
}
.m-pill-green {
  background-color: #00b180;
  color: #fff;
}
.scroll-btns {
  position: absolute;
  right: 1px;
  top: 35px;
  width: 15px;
}
.scroll-up,
.scroll-down {
  display: block;
  height: 14px;
  background-color: #f4f4f4;
  border-radius: 3px;
  position: relative;
}
.scroll-down {
  background-color: #fff;
  margin-top: 1px;
}
.scroll-up::after,
.scroll-down::after {
  content: "";
  position: absolute;
  left: 3px;
  top: 5px;
  border-left: 4px solid transparent;
  border-right: 4px solid transparent;
}
.scroll-up::after {
  border-bottom: 5px solid #bbb;
}
.scroll-down::after {
  border-top: 5px solid #556;
}

/* shelves and view */
.sheet {
  flex: 1;
  min-width: 0;
  margin: 0 6px 7px 7px;
  display: flex;
  flex-direction: column;
  gap: 7px;
}
.shelf {
  height: 31px;
  flex: none;
  display: flex;
  background-color: #fafafa;
  border: 1px solid #d4d4d4;
  border-top-color: #e0e0e0;
}
.shelf-label {
  width: 159px;
  flex: none;
  display: flex;
  align-items: center;
  padding-left: 8px;
  border-right: 1px solid #d4d4d4;
  color: #555;
  font-size: 14.5px;
}
.shelf-ico-cols {
  width: 19px;
  color: #555;
  font-weight: 700;
  font-size: 13px;
}
.shelf-ico-rows {
  width: 19px;
}
.shelf-ico-rows i {
  width: 12px;
  height: 2px;
  margin: 2px 0;
  background-color: #555;
}
.shelf-pills {
  display: flex;
  gap: 1px;
  align-items: center;
}
.pill {
  width: 179px;
  height: 24px;
  line-height: 24px;
  padding-left: 14px;
  background-color: #00b180;
  color: #fff;
  font-size: 16px;
}
.pill-left {
  border-radius: 12px 0 0 12px;
}
.pill-right {
  border-radius: 0 12px 12px 0;
}
.view {
  flex: 1;
  min-height: 0;
  padding: 8px 7px 10px 7px;
  display: flex;
  flex-direction: column;
  gap: 6px;
  background-color: #000;
}
.view-title {
  height: 39px;
  flex: none;
  border: 2px solid #fff;
  text-align: center;
  line-height: 35px;
  color: #8dbfe8;
  font-size: 25.2px;
}
.chart {
  flex: 1;
  margin: 0 6px 0 4px;
  position: relative;
  display: flex;
  align-items: center;
  justify-content: center;
  border: 2px solid #fff;
}
.donut {
  width: 210px;
  height: 210px;
}
.lbl {
  position: absolute;
  transform: translateX(-50%);
  white-space: nowrap;
  text-align: center;
  line-height: 21px;
  color: #e4e4e4;
  font-size: 15px;
}
.lbl-water { left: 576px; top: 222px; }
.lbl-rotation { left: 821px; top: 222px; }
.lbl-organic { left: 550px; top: 383px; }
.lbl-drought { left: 896px; top: 383px; }
.lbl-none { left: 657px; top: 457px; }
.lbl-total { left: 709px; top: 319px; }

/* sheet tabs */
.tabs {
  height: 37px;
  flex: none;
  display: flex;
  background-color: #e6e6e6;
  border-top: 1px solid #d4d4d4;
  border-bottom: 1px solid #d4d4d4;
}
.tab {
  flex: none;
  display: flex;
  align-items: center;
  padding-left: 6px;
  border-right: 1px solid #d4d4d4;
  white-space: nowrap;
  overflow: hidden;
  color: #555;
  font-size: 14.8px;
}
.tab-ico {
  width: 13px;
  height: 13px;
  margin-right: 4px;
  flex: none;
}
.tab-source { width: 162px; padding-left: 8px; }
.tab-short { width: 86px; padding-left: 1px; }
.tab-eco { width: 239px; }
.tab-wide { width: 250px; }
.tab-story { width: 86px; padding-left: 7px; }
.tab-add {
  width: 32px;
  padding: 0;
  justify-content: center;
}
.tab-add .ico {
  width: 18px;
  height: 18px;
}
.tab-on {
  background-color: #fafafa;
  font-weight: 700;
  font-size: 14.6px;
  color: #444;
}
.tab-teal {
  box-shadow: inset 0 -4px 0 #72b7b1;
}

/* status bar */
.status {
  height: 26px;
  flex: none;
  display: flex;
  align-items: center;
  gap: 22px;
  padding-left: 3px;
  background-color: #f0f0f0;
  color: #333;
  font-size: 13px;
  white-space: nowrap;
}
.st-marks {
  width: 48px;
}
.st-rows {
  margin-right: -3px;
}
.status-right {
  margin-left: auto;
  height: 100%;
  display: flex;
  align-items: center;
}
.st-cell {
  width: 32px;
  height: 100%;
  border-left: 1px solid #ddd;
}
.st-cell-a {
  width: 157px;
}
.st-cell-nav {
  width: 135px;
  display: flex;
  align-items: center;
  gap: 6px;
  padding-left: 63px;
}
.nav-ico {
  width: 10px;
  height: 10px;
}
.view-ico {
  width: 12px;
  height: 12px;
  margin-right: 10px;
}
.view-ico:last-child {
  margin-right: 6px;
}

/* windows taskbar */
.taskbar {
  height: 60px;
  flex: none;
  position: relative;
  display: flex;
  align-items: center;
  background-color: #1c1c1c;
  color: #f2f2f2;
}
.task-center {
  display: flex;
  align-items: center;
  margin-left: 613px;
}
.win-logo {
  width: 30px;
  height: 30px;
  flex: none;
}
.task-search {
  margin-left: 16px;
  width: 275px;
  height: 40px;
  display: flex;
  align-items: center;
  padding: 0 2px 0 15px;
  border-radius: 20px;
  background-color: #3a3a3a;
  font-family: "Open Sans", sans-serif;
  font-size: 16px;
}
.task-search-ico {
  width: 20px;
  height: 20px;
  margin-right: 12px;
}
.task-search-art {
  margin-left: auto;
  width: 62px;
  height: 36px;
}
.app {
  width: 32px;
  height: 32px;
  display: block;
  flex: none;
}
.task-center > .app,
.app-wrap {
  margin-left: 23px;
}
.task-center > .app-first {
  margin-left: 15px;
}
.app-wrap {
  position: relative;
}
.run-dot {
  position: absolute;
  left: 12px;
  top: 37px;
  width: 8px;
  height: 5px;
  border-radius: 3px;
  background-color: #8a8a8a;
}
.avatar {
  position: absolute;
  right: -5px;
  top: -5px;
  width: 20px;
  height: 20px;
  border-radius: 50%;
  background: radial-gradient(circle, #a03030 25%, #333 70%);
}
.badge {
  position: absolute;
  right: -7px;
  top: -8px;
  width: 23px;
  height: 23px;
  border-radius: 50%;
  background-color: #ef7e68;
  color: #111;
  text-align: center;
  line-height: 23px;
  font-size: 13px;
}
.app-active {
  margin-left: 15px;
  width: 49px;
  height: 50px;
  position: relative;
  display: flex;
  justify-content: center;
  padding-top: 10px;
  border-radius: 5px;
  background-color: #2a2a2a;
}
.tb-tile {
  width: 28px;
  height: 28px;
  padding: 2px;
  background-color: #f4f4f4;
  color: #3f84b0;
}
.tb-tile svg {
  width: 24px;
  height: 24px;
  display: block;
}
.active-bar {
  position: absolute;
  left: 15px;
  bottom: 2px;
  width: 19px;
  height: 4px;
  border-radius: 2px;
  background-color: #f08068;
}
.tray {
  position: absolute;
  right: 24px;
  top: 0;
  height: 60px;
  display: flex;
  align-items: center;
  font-family: "Open Sans", sans-serif;
}
.tray-chev {
  width: 14px;
  height: 8px;
  margin-right: 23px;
}
.tray-lang {
  width: 34px;
  margin-right: 22px;
  text-align: center;
  line-height: 20px;
  font-size: 14px;
}
.tray-ico {
  width: 20px;
  height: 20px;
  margin-right: 9px;
}
.tray-clock {
  margin-left: 5px;
  width: 100px;
  text-align: right;
  line-height: 20px;
  font-size: 14.5px;
}
```
